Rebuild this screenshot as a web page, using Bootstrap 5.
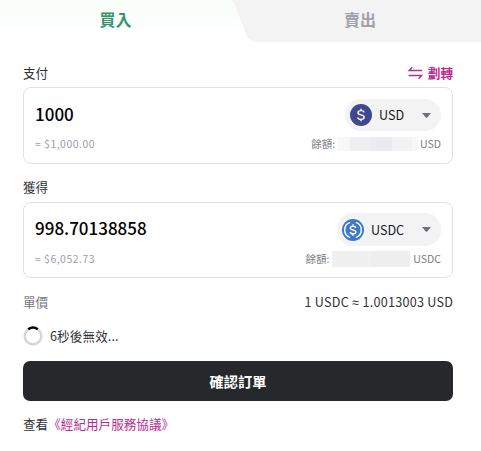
<!DOCTYPE html>
<html lang="zh-Hant">
<head>
<meta charset="utf-8">
<meta name="viewport" content="width=device-width, initial-scale=1">
<title>買入</title>
<link href="https://cdn.jsdelivr.net/npm/bootstrap@5.3.0/dist/css/bootstrap.min.css" rel="stylesheet">
<style>
  body { font-family: "Noto Sans CJK TC", "Noto Sans", sans-serif; font-size: 12.6px; line-height: 20px; color: #303236; width: 481px; height: 451px; overflow: hidden; }
  .trade-tabs { height: 42px; background: linear-gradient(#f8fefa, #fff 38px); font-size: 16px; line-height: 38px; }
  .tab-buy { width: 231px; color: #359370; }
  .tab-sell { width: 250px; padding-left: 8px; color: #a2a1aa; background: #f3f3f3; clip-path: path("M0 0 Q2 1 4 5 L15 34 Q18 42 27 42 L250 42 L250 0 Z"); }
  .trade-form { padding: 21px 28px 0 23px; }
  .amount-box { border: 1px solid #e2e2e4; border-radius: 8px; padding: 11px 11px 0; }
  .pay-box { height: 77px; margin-top: 4px; }
  .get-box { height: 76px; margin-top: 5px; padding-top: 10px; }
  .get-label { margin-top: 13px; }
  .amount { font-size: 17px; font-weight: 500; line-height: 30px; color: #000; }
  .coin { height: 32px; border-radius: 16px; background: #f3f3f3; padding: 0 10px 0 5px; color: #18191c; }
  .coin-usd { width: 96px; }
  .coin-usdc { width: 104px; height: 33px; }
  .coin-name { margin-left: 7px; }
  .note { font-size: 10.5px; line-height: 16px; color: #7c7b86; padding-top: 5px; }
  .approx { color: #a0a0ab; letter-spacing: .48px; }
  .almost { font-family: "Liberation Sans", sans-serif; }
  .hidden-sum { height: 14px; margin-left: 3px; margin-right: 2px; }
  .mask-usd { width: 80px; background: linear-gradient(90deg, #f8f8f8 12px, #efeff2 12px 33px, #ebebef 33px 54px, #f3f3f5 54px 74px, #f7f7f7 74px); }
  .mask-usdc { width: 78px; height: 16px; background: linear-gradient(90deg, #f0f0f0 39px, #eee 39px); margin-right: 3px; }
  .pink { color: #b92b91; }
  .unit-price { margin-top: 14px; }
  .unit-label { color: #77767f; }
  .rate { letter-spacing: .27px; margin-right: -.27px; }
  .expiry { margin-top: 13px; }
  .spin-label { margin-left: 7px; letter-spacing: .1px; }
  .confirm { height: 40px; background: #27282b; color: #fff; border-radius: 7px; font-size: 14.2px; line-height: 20px; margin-top: 15px; }
  .confirm:hover { background: #34363a; color: #fff; }
  .terms { margin-top: 13px; }
</style>
<script src="https://cdn.jsdelivr.net/npm/bootstrap@5.3.0/dist/js/bootstrap.bundle.min.js"></script>
</head>
<body class="bg-white">
<div class="trade-tabs d-flex text-center fw-bold">
  <div class="tab-buy">買入</div>
  <div class="tab-sell">賣出</div>
</div>
<main class="trade-form">
  <div class="d-flex justify-content-between align-items-center">
    <span>支付</span>
    <span class="transfer pink d-flex align-items-center fw-semibold">
      <svg class="me-1" width="17" height="14" viewBox="0 0 17 14" fill="none" stroke="currentColor" stroke-width="1.4"><path d="M5.2 1.2 2.2 4.5H15.2M1.6 9.5H14.6L11.6 12.8"/></svg>劃轉
    </span>
  </div>
  <section class="amount-box pay-box">
    <div class="d-flex justify-content-between">
      <span class="amount">1000</span>
      <div class="coin coin-usd d-flex align-items-center">
        <svg width="22" height="22" viewBox="0 0 22 22"><circle cx="11" cy="11" r="11" fill="#40488f"/><path d="M14.1 8.4C13.8 7.2 12.6 6.6 11 6.6c-1.8 0-3 .8-3 2.1 0 3 6.2 1.4 6.2 4.4 0 1.4-1.3 2.3-3.2 2.3-1.8 0-3-.8-3.3-2.1M11 4.7v2M11 15.3v2" fill="none" stroke="#fff" stroke-width="1.4"/></svg>
        <span class="coin-name">USD</span>
        <svg class="ms-auto" width="9" height="5" viewBox="0 0 9 5"><path d="M0 0H9L5.2 4.5Q4.5 5.2 3.8 4.5Z" fill="#716f7a"/></svg>
      </div>
    </div>
    <div class="note d-flex justify-content-between align-items-center">
      <span class="approx"><span class="almost">≈</span> $1,000.00</span>
      <span class="d-flex align-items-center">餘額:<span class="hidden-sum mask-usd"></span>USD</span>
    </div>
  </section>
  <div class="get-label">獲得</div>
  <section class="amount-box get-box">
    <div class="d-flex justify-content-between">
      <span class="amount">998.70138858</span>
      <div class="coin coin-usdc d-flex align-items-center">
        <svg width="22" height="22" viewBox="0 0 22 22"><circle cx="11" cy="11" r="11" fill="#3d78cc"/><g fill="none" stroke="#fff"><path d="M8.2 3.4a8 8 0 0 0 0 15.2M13.8 3.4a8 8 0 0 1 0 15.2" stroke-width="1.5"/><path d="M13.7 9C13.5 7.8 12.5 7.2 11 7.2S8.3 7.9 8.3 9c0 2.6 5.5 1.3 5.5 3.9 0 1.2-1.2 1.9-2.8 1.9S8.3 14.1 8.1 13M11 5.3v2M11 14.7v2" stroke-width="1.4"/></g></svg>
        <span class="coin-name">USDC</span>
        <svg class="ms-auto" width="9" height="5" viewBox="0 0 9 5"><path d="M0 0H9L5.2 4.5Q4.5 5.2 3.8 4.5Z" fill="#716f7a"/></svg>
      </div>
    </div>
    <div class="note d-flex justify-content-between align-items-center">
      <span class="approx"><span class="almost">≈</span> $6,052.73</span>
      <span class="d-flex align-items-center">餘額:<span class="hidden-sum mask-usdc"></span>USDC</span>
    </div>
  </section>
  <div class="unit-price d-flex justify-content-between">
    <span class="unit-label">單價</span>
    <span class="rate">1 USDC <span class="almost">≈</span> 1.0013003 USD</span>
  </div>
  <div class="expiry d-flex align-items-center">
    <svg width="20" height="20" viewBox="0 0 20 20" fill="none" stroke-width="2.5"><circle cx="10" cy="10" r="8.3" stroke="#d6d6da"/><path d="M5.2 3.2a8.3 8.3 0 0 1 9.6 0" stroke="#000"/></svg>
    <span class="spin-label">6秒後無效...</span>
  </div>
  <button type="button" class="btn confirm w-100 border-0 fw-bold">確認訂單</button>
  <div class="terms"><span>查看</span><span class="pink">《經紀用戶服務協議》</span></div>
</main>
</body>
</html>
